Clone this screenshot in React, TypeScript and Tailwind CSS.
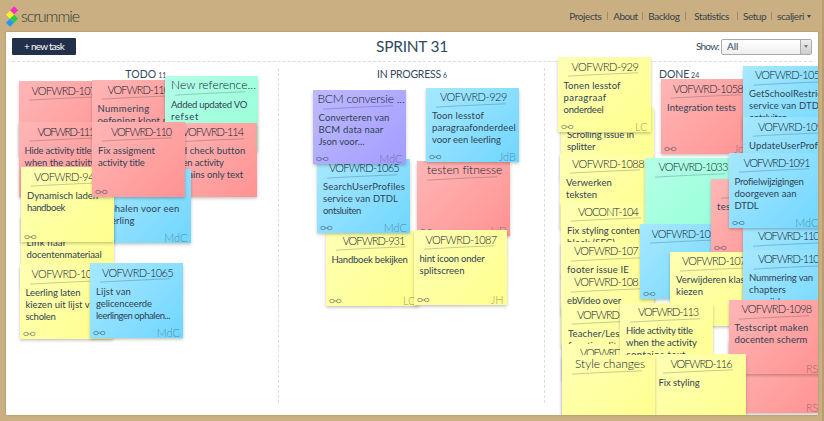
import { useLayoutEffect, useRef } from "react";

type Color = "red" | "blue" | "yellow" | "green" | "purple";
type Line = [text: string, width?: number];

interface Task {
  x: number;
  y: number;
  color: Color;
  title: Line;
  titleX?: number;
  big?: boolean;
  lines?: Line[];
  who?: string;
}

const colors: Record<Color, string> = {
  red: "from-[#ffb6b6] to-[#ff9292]",
  blue: "from-[#a6e8ff] to-[#6fd6ff]",
  yellow: "from-[#ffffb4] to-[#ffff8c]",
  green: "from-[#b4ffe8] to-[#94ffd6]",
  purple: "from-[#bebaff] to-[#a39dff]",
};

const tasks: Task[] = [
  // Todo
  { x: 18.5, y: 81, color: "red", title: ["VOFWRD-107", 64], titleX: 13 },
  { x: 91.5, y: 80, color: "red", title: ["VOFWRD-1104", 67], titleX: 16, lines: [["Nummering", 52], ["oefening klopt niet", 82]] },
  { x: 18.5, y: 122, color: "red", title: ["VOFWRD-111", 56], titleX: 19, lines: [["Hide activity title", 67], ["when the activity", 71]] },
  { x: 165, y: 76, color: "green", title: ["New reference...", 85], titleX: 6, big: true, lines: [["Added updated VO", 76], ["refset", 28]] },
  { x: 164, y: 122.5, color: "red", title: ["VOFWRD-114", 61], titleX: 18, lines: [["Add check button", 75], ["when activity", 54], ["contains only text", 73]] },
  { x: 97.5, y: 168.5, color: "blue", title: ["VOFWRD-1064", 70], lines: [["", 0], ["ophalen voor een", 76], ["leerling", 31]], who: "MdC" },
  { x: 20.5, y: 214.5, color: "yellow", title: ["VOFWRD-942", 64], lines: [["Link naar", 40], ["docentenmateriaal", 75]] },
  { x: 21, y: 167, color: "yellow", title: ["VOFWRD-94", 60], titleX: 13, lines: [["Dynamisch laden", 71], ["handboek", 38]] },
  { x: 92, y: 122, color: "red", title: ["VOFWRD-110", 60], titleX: 19, lines: [["Fix assigment", 57], ["activity title", 47]] },
  { x: 19.5, y: 264.5, color: "yellow", title: ["VOFWRD-107", 66], lines: [["Leerling laten", 55], ["kiezen uit lijst van", 74], ["scholen", 30]] },
  { x: 90, y: 263, color: "blue", title: ["VOFWRD-1065", 71], lines: [["Lijst van", 35], ["gelicenceerde", 56], ["leerlingen ophalen...", 74]], who: "MdC" },
  // In progress
  { x: 417, y: 161, color: "red", title: ["testen fitnesse", 75], titleX: 10, big: true, who: "JvD" },
  { x: 325.5, y: 231, color: "yellow", title: ["VOFWRD-931", 62], titleX: 17, lines: [["Handboek bekijken", 76]], who: "LC" },
  { x: 317, y: 158.5, color: "blue", title: ["VOFWRD-1065", 70], lines: [["SearchUserProfiles", 82], ["service van DTDL", 75], ["ontsluiten", 38]], who: "MdC" },
  { x: 312.5, y: 89.5, color: "purple", title: ["BCM conversie ...", 87], titleX: 5, big: true, lines: [["Converteren van", 71], ["BCM data naar", 65], ["Json voor...", 46]], who: "MdC" },
  { x: 426, y: 87.5, color: "blue", title: ["VOFWRD-929", 67], titleX: 14, lines: [["Toon lesstof", 52], ["paragraafonderdeel", 84], ["voor een leerling", 69]], who: "JdB" },
  { x: 413.5, y: 230, color: "yellow", title: ["VOFWRD-1087", 71], lines: [["hint icoon onder", 65], ["splitscreen", 45]], who: "JH" },
  // Done
  { x: 561, y: 106.5, color: "yellow", title: ["VOFWRD-108", 64], lines: [["Scrolling issue in", 67], ["splitter", 28]] },
  { x: 557.5, y: 57, color: "yellow", title: ["VOFWRD-929", 67], titleX: 14, lines: [["Tonen lesstof", 57], ["paragraaf", 43], ["onderdeel", 40]], who: "LC" },
  { x: 560, y: 154, color: "yellow", title: ["VOFWRD-1088", 72], lines: [["Verwerken", 46], ["teksten", 31]] },
  { x: 561, y: 202, color: "yellow", title: ["VOCONT-104", 60], titleX: 17, lines: [["Fix styling content", 76], ["block (SEC)", 48]] },
  { x: 561, y: 241.5, color: "yellow", title: ["VOFWRD-107", 64], titleX: 13, lines: [["footer issue IE", 62]] },
  { x: 561, y: 272.5, color: "yellow", title: ["VOFWRD-108", 64], titleX: 13, lines: [["ebVideo over", 54]] },
  { x: 562, y: 305, color: "yellow", title: ["VOFWRD-112", 61], titleX: 15, lines: [["Teacher/Lesstof", 68], ["functionaliteit", 60]] },
  { x: 562, y: 343.5, color: "yellow", title: ["VOFWRD-115", 60], titleX: 18 },
  { x: 661, y: 79, color: "red", title: ["VOFWRD-1058", 70], lines: [["Integration tests", 69]], who: "JdB" },
  { x: 743, y: 65.5, color: "blue", title: ["VOFWRD-1057", 70], lines: [["GetSchoolRestricti", 79], ["service van DTDL", 75], ["ontsluiten", 38]] },
  { x: 743, y: 117, color: "blue", title: ["VOFWRD-1090", 70], titleX: 15, lines: [["UpdateUserProfiles", 83]] },
  { x: 644.5, y: 157.5, color: "green", title: ["VOFWRD-1033", 69], titleX: 14 },
  { x: 639.5, y: 224, color: "blue", title: ["VOFWRD-1036", 70], titleX: 12 },
  { x: 711, y: 178.5, color: "red", title: ["", 0], lines: [["testen", 28]] },
  { x: 670, y: 251.5, color: "yellow", title: ["VOFWRD-1072", 69], titleX: 12, lines: [["Verwijderen klassen", 83], ["kiezen", 27]] },
  { x: 743, y: 226.5, color: "blue", title: ["VOFWRD-1101", 66], titleX: 15 },
  { x: 743, y: 249.5, color: "blue", title: ["VOFWRD-1102", 66], titleX: 15, lines: [["Nummering van", 64], ["chapters", 37], ["verwijderen", 50]] },
  { x: 728.5, y: 153, color: "blue", title: ["VOFWRD-1091", 66], titleX: 15, lines: [["Profielwijzigingen", 69], ["doorgeven aan", 62], ["DTDL", 24]], who: "MdC" },
  { x: 728.5, y: 338.5, color: "red", title: ["", 0], who: "RS" },
  { x: 728.5, y: 299.5, color: "red", title: ["VOFWRD-1098", 70], titleX: 13, lines: [["Testscript maken", 74], ["docenten scherm", 73]], who: "RS" },
  { x: 620, y: 302.5, color: "yellow", title: ["VOFWRD-113", 60], titleX: 18, lines: [["Hide activity title", 67], ["when the activity", 71], ["contains text", 60]] },
  { x: 652.5, y: 354, color: "yellow", title: ["VOFWRD-116", 61], titleX: 18, lines: [["Fix styling", 41]] },
  { x: 562, y: 355, color: "yellow", title: ["Style changes", 70], titleX: 13, big: true },
];

/** Spreads the letters of a line so that it fills the given width. */
function FitText({ line, className = "" }: { line: Line; className?: string }) {
  const ref = useRef<HTMLSpanElement>(null);
  const [text, width] = line;
  useLayoutEffect(() => {
    const el = ref.current;
    if (!el || !width || !text) return;
    el.style.letterSpacing = "0px";
    const natural = el.getBoundingClientRect().width;
    el.style.letterSpacing = `${(width - natural) / text.length}px`;
  }, [text, width]);
  return (
    <span ref={ref} className={`inline-block whitespace-nowrap ${className}`}>
      {text}
    </span>
  );
}

function LinkIcon() {
  return (
    <svg width="13" height="6" viewBox="0 0 13 6" fill="none" stroke="currentColor" strokeWidth="0.9">
      <ellipse cx="3" cy="3" rx="2.3" ry="1.7" />
      <ellipse cx="9.8" cy="3" rx="2.3" ry="1.7" />
      <path d="M5 3h3" />
    </svg>
  );
}

function Note({ task }: { task: Task }) {
  const { x, y, color, title, titleX, big, lines = [], who } = task;
  return (
    <article
      className={`absolute h-[74.5px] w-[93px] overflow-hidden bg-linear-135 text-[#2f4254] shadow-[0_1.5px_3px_rgba(0,0,0,0.24)] ${colors[color]}`}
      style={{ left: x - 6, top: y - 32 }}
    >
      <h3
        className={`flex h-[18px] items-center font-light leading-none text-[#12222f] ${big ? "text-[12px]" : "text-[11px]"}`}
        style={{ paddingLeft: titleX ?? 12 }}
      >
        <FitText line={title} />
      </h3>
      <svg className="absolute left-[10px] top-[15px]" width="72" height="6" fill="none">
        <path d="M0 4.2Q20 2.8 70 .8" stroke="#334455" strokeOpacity=".4" strokeWidth=".7" />
      </svg>
      <div className="flex flex-col pl-[6px] pt-[4.5px] text-[9.5px] leading-[12px]">
        {lines.map((line, i) => (
          <FitText key={i} line={line} className="min-h-3 self-start" />
        ))}
      </div>
      <div className="absolute inset-x-[3px] bottom-[-1px] flex items-end justify-between text-[#334455]/55">
        <span className="pb-[3px]">
          <LinkIcon />
        </span>
        <span className="text-[11px] font-light leading-[12px]">{who}</span>
      </div>
    </article>
  );
}

function Logo() {
  return (
    <div className="flex items-center gap-[2px]">
      <svg width="13" height="21" viewBox="0 0 13 21">
        <path d="M8.2.3 12.2 4.3 8.2 8.3 4.2 4.3Z" fill="#ff2bc4" />
        <path d="M4 4.7 8 8.7 4 12.7 0 8.7Z" fill="#fff02e" />
        <path d="M8.2 8.7 12.2 12.7 8.2 16.7 4.2 12.7Z" fill="#27d13c" />
        <path d="M4 12.7 8 16.7 4 20.7 0 16.7Z" fill="#2797f5" />
      </svg>
      <span className="text-[16px] font-light leading-5 text-[#33393d]">
        <FitText line={["scrummie", 58]} />
      </span>
    </div>
  );
}

const nav: [string, number, string][] = [
  ["Projects", 32, "mr-[6px]"],
  ["About", 24, "mr-[5px]"],
  ["Backlog", 31, "mr-[6px]"],
  ["Statistics", 35, "ml-[3px] mr-[8px]"],
  ["Setup", 23, "mr-[5px]"],
];

const columns = [
  { name: "TODO", count: 11, width: 31, shift: "pl-[2px]" },
  { name: "IN PROGRESS", count: 6, width: 64, shift: "pl-px" },
  { name: "DONE", count: 24, width: 30, shift: "pl-px" },
];

export default function App() {
  return (
    <div className="flex h-[421px] w-[824px] flex-col overflow-hidden border-r-2 border-[#b89d70] bg-[#c9af81] pl-[6px] pr-[4px] font-[Lato,'Open_Sans',sans-serif] text-[#34495e]">
      <header className="flex h-8 shrink-0 items-center justify-between pr-[7px]">
        <Logo />
        <nav className="flex items-center text-[10px] text-[#38434d]">
          {nav.map(([label, width, space]) => (
            <div key={label} className="flex items-center">
              <a className={space}>
                <FitText line={[label, width]} />
              </a>
              <span className="mr-[5px] h-[8px] w-px bg-[#a08b68]" />
            </div>
          ))}
          <a className="flex items-center gap-[3px]">
            <FitText line={["scaljeri", 27]} />
            <span className="border-x-[2.5px] border-t-[3px] border-x-transparent border-t-[#38434d]" />
          </a>
        </nav>
      </header>

      <main className="relative flex h-[383px] w-[812px] shrink-0 flex-col overflow-hidden rounded-[1px] bg-white px-[6px] shadow-[0_0_2px_rgba(90,60,10,0.35)]">
        <div className="grid h-[30px] shrink-0 grid-cols-3 items-center border-b border-dashed border-[#dcdcdc]">
          <button className="h-[17px] w-16 justify-self-start rounded-[1px] bg-[#22304a] text-[10px] leading-[15px] text-white">
            <FitText line={["+ new task", 40]} />
          </button>
          <h1 className="justify-self-center pb-px text-[15.5px] leading-5">
            <FitText line={["SPRINT 31", 72]} />
          </h1>
          <div className="flex items-center gap-[2px] justify-self-end text-[10px]">
            <FitText line={["Show:", 23]} />
            <div className="flex h-[16px] w-[91px] items-center justify-between overflow-hidden rounded-[2px] border border-[#aaa] bg-linear-to-b from-white to-[#eee]">
              <span className="pl-[5px]">All</span>
              <span className="flex h-full w-[11px] items-center justify-center border-l border-[#aaa] bg-linear-to-b from-[#eee] to-[#ccc]">
                <span className="border-x-2 border-t-[3px] border-x-transparent border-t-[#777]" />
              </span>
            </div>
          </div>
        </div>

        <div className="mt-[6px] grid h-[335px] grid-cols-3 divide-x divide-dashed divide-[#dcdcdc]">
          {columns.map((column) => (
            <section key={column.name}>
              <h2 className={`flex items-baseline justify-center gap-[2px] text-[10.5px] leading-[13px] ${column.shift}`}>
                <FitText line={[column.name, column.width]} />
                <span className="text-[7px]">{column.count}</span>
              </h2>
            </section>
          ))}
        </div>

        {tasks.map((task, i) => (
          <Note key={i} task={task} />
        ))}
      </main>
    </div>
  );
}
